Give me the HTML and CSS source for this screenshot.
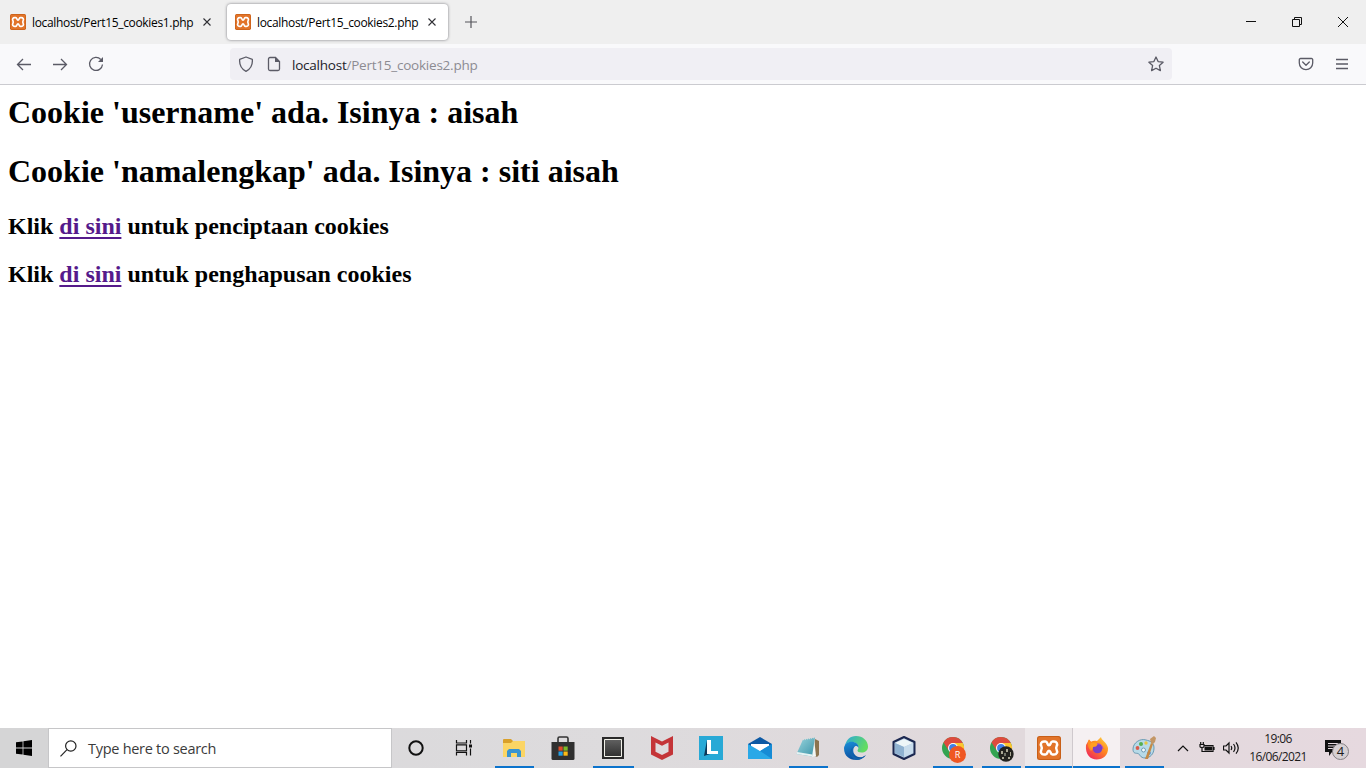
FILE: index.html
```html
<!DOCTYPE html>
<html lang="id">
<head>
<meta charset="utf-8">
<title>localhost/Pert15_cookies2.php</title>
<link rel="stylesheet" href="styles.css">
</head>
<body>
<svg class="defs" width="0" height="0">
  <defs>
    <linearGradient id="sky" x1="0" y1="0" x2="1" y2="1"><stop offset="0" stop-color="#9bd6de"/><stop offset="1" stop-color="#3b93a8"/></linearGradient>
    <linearGradient id="edgeBlue" x1="0" y1="0" x2="0.3" y2="1"><stop offset="0" stop-color="#1b8fd8"/><stop offset="1" stop-color="#0c4fa0"/></linearGradient>
    <linearGradient id="edgeGreen" x1="0" y1="0" x2="1" y2="0.4"><stop offset="0" stop-color="#2aa7dc"/><stop offset="1" stop-color="#62dc62"/></linearGradient>
    <linearGradient id="fox" x1="1" y1="0" x2="0.2" y2="1"><stop offset="0" stop-color="#ffe14a"/><stop offset=".45" stop-color="#ff8a1e"/><stop offset="1" stop-color="#f0245e"/></linearGradient>
    <linearGradient id="dark" x1="0" y1="0" x2="0" y2="1"><stop offset="0" stop-color="#616161"/><stop offset="1" stop-color="#303030"/></linearGradient>
    <symbol id="xampp" viewBox="0 0 24 24">
      <rect width="24" height="24" rx="2.500" fill="#c85f17"/><rect x="1" y="1" width="22" height="22" rx="2" fill="#e2742a"/>
      <path d="M8.500 5.500H7C4.200 5.500 3.200 8 4.300 10 5 11.300 5 12.700 4.300 14 3.200 16 4.200 18.500 7 18.500H8.500C10.800 18.500 10 14.700 12 14.700S13.200 18.500 15.500 18.500H17C19.800 18.500 20.800 16 19.700 14 19 12.700 19 11.300 19.700 10 20.800 8 19.800 5.500 17 5.500H15.500C13.200 5.500 14 9.300 12 9.300S10.800 5.500 8.500 5.500Z" fill="none" stroke="#fff" stroke-width="2.500" stroke-linejoin="round"/>
    </symbol>
    <symbol id="chrome" viewBox="0 0 24 24">
      <circle cx="12" cy="12" r="11" fill="#33a451"/><path d="M12 7h9.800A11 11 0 0 1 11 23l5.300-8.500Z" fill="#fbc52f"/><path d="M2.500 6.500 7.700 14.500 12 7h9.800A11 11 0 0 0 2.500 6.500Z" fill="#dd4b3e"/>
      <circle cx="12" cy="12" r="5" fill="#fff"/><circle cx="12" cy="12" r="3.900" fill="#3f7fe8"/>
    </symbol>
  </defs>
</svg>
<div class="screen">
  <header class="tabs">
    <div class="tab"><svg class="favicon"><use href="#xampp"/></svg><span class="label">localhost/Pert15_cookies1.php</span><svg class="close" viewBox="0 0 8 8"><path d="m.5.5 7 7m0-7-7 7"/></svg></div>
    <div class="tab active"><svg class="favicon"><use href="#xampp"/></svg><span class="label">localhost/Pert15_cookies2.php</span><svg class="close" viewBox="0 0 8 8"><path d="m.5.5 7 7m0-7-7 7"/></svg></div>
    <svg class="plus" viewBox="0 0 12 12"><path d="M6 0v12M0 6h12"/></svg>
    <div class="window-buttons">
      <svg viewBox="0 0 12 12"><path d="M1 5.500h10" /></svg>
      <svg viewBox="0 0 12 12"><path d="M1.500 3.500h7v7h-7zM3.500 3.500v-2h7v7h-2"/></svg>
      <svg viewBox="0 0 12 12"><path d="m1 1 10 10M11 1 1 11"/></svg>
    </div>
  </header>
  <nav class="toolbar">
    <div class="nav-buttons">
      <svg viewBox="0 0 16 16"><path d="M15 8.500H1.500M7 3 1.500 8.500 7 14"/></svg>
      <svg viewBox="0 0 16 16"><path d="M1 8.500h13.500M9 3l5.500 5.500L9 14"/></svg>
      <svg viewBox="0 0 16 16"><path d="M12.800 3.500A6.500 6.500 0 1 0 14.500 8.500"/><path d="M15 1v5h-5z" fill="#5b5b66" stroke="none"/></svg>
    </div>
    <div class="address">
      <svg viewBox="0 0 16 16"><path d="M8 1 14.300 3.300C14.800 8.500 12.500 13 8 15.300 3.500 13 1.200 8.500 1.700 3.300Z" stroke-linejoin="round"/></svg>
      <svg viewBox="0 0 16 16"><path d="M9.500 1.500H4A1.500 1.500 0 0 0 2.500 3v10A1.500 1.500 0 0 0 4 14.500h8a1.500 1.500 0 0 0 1.500-1.500V5.500z"/><path d="M9 1v5h5z" fill="#5b5b66" stroke="none"/></svg>
      <span class="url">localhost<span>/Pert15_cookies2.php</span></span>
      <svg class="star" viewBox="0 0 16 16"><path d="m8 1 2.100 4.600 5 .6-3.700 3.400 1 5L8 12.200l-4.400 2.400 1-5L.9 6.200l5-.6Z" stroke-linejoin="round"/></svg>
    </div>
    <div class="tools">
      <svg viewBox="0 0 16 16"><path d="M2.500 2.500h11a1.200 1.200 0 0 1 1.200 1.200V7a6.700 6.700 0 0 1-13.400 0V3.700a1.200 1.200 0 0 1 1.200-1.200ZM4.700 6 8 9.200 11.300 6" stroke-linecap="round" stroke-linejoin="round"/></svg>
      <svg viewBox="0 0 16 16"><path d="M2 3.500h12M2 8h12M2 12.500h12"/></svg>
    </div>
  </nav>
  <main class="page">
    <h1>Cookie 'username' ada. Isinya : aisah</h1>
    <h1>Cookie 'namalengkap' ada. Isinya : siti aisah</h1>
    <h2>Klik <a href="#">di sini</a> untuk penciptaan cookies</h2>
    <h2>Klik <a href="#">di sini</a> untuk penghapusan cookies</h2>
  </main>
  <footer class="taskbar">
    <div class="start"><svg viewBox="0 0 16 16"><path d="M0 2.300 6.600 1.400V7.600H0zM7.400 1.300 16 0v7.600H7.400zM0 8.400h6.600v6.200L0 13.700zM7.400 8.400H16V16l-8.600-1.300z"/></svg></div>
    <div class="search"><svg viewBox="0 0 17 17"><circle cx="10.800" cy="6" r="5.200"/><path d="m7 9.700-6.500 6.600"/></svg><span>Type here to search</span></div>
    <div class="apps">
      <div><svg viewBox="0 0 24 24"><circle cx="12" cy="12" r="6.700" fill="none" stroke="#111" stroke-width="2"/></svg></div>
      <div><svg class="views" viewBox="0 0 24 24" fill="none" stroke="#111" stroke-width="1.200"><path d="M3.500 4v3h10V4M3.500 19.500v-3h10v3M3.500 8.800h10v6h-10zM17.500 4v3.500M17.500 12.500v7"/><path d="M16 8.500h3v3h-3z" fill="#111" stroke="none"/></svg></div>
      <div class="running"><svg viewBox="0 0 24 24"><path d="M1 4q0-1 1-1h7l2 2h11v16H1z" fill="#d9a02a"/><path d="M1 7h8l2-2h12v16H1z" fill="#fbd565"/><path d="M5 21v-6l2-2h10l2 2v6h-4v-4H9v4z" fill="#3994d1"/></svg></div>
      <div><svg viewBox="0 0 24 24"><path d="M7 6V2.500Q7 1 8.500 1h7Q17 1 17 2.500V6" fill="none" stroke="#333" stroke-width="1.600"/><path d="M.5 6h23v16.500q0 1.500-1.500 1.500H2q-1.500 0-1.500-1.500z" fill="#303030"/><path d="M7.500 10.500h4.200v4.200H7.500z" fill="#e04d2b"/><path d="M12.500 10.500h4.200v4.200h-4.200z" fill="#7cb928"/><path d="M7.500 15.500h4.200v4.200H7.500z" fill="#25a0e5"/><path d="M12.500 15.500h4.200v4.200h-4.200z" fill="#fbbb16"/></svg></div>
      <div class="running"><svg viewBox="0 0 24 24"><path d="M1 1h22v22H1z" fill="#292929"/><path d="M3.500 3.500h17v17h-17z" fill="url(#dark)" stroke="#f1f1e9"/></svg></div>
      <div><svg viewBox="0 0 24 24"><path d="m1 0 11 5.500L23 0v18.500L12 24 1 18.500z" fill="#c43438"/><path d="m5.500 6.500 6.500 3.300 6.500-3.300v9.300L12 19l-6.500-3.200z" fill="#dfdadd"/></svg></div>
      <div><svg viewBox="0 0 24 24"><path d="M0 0h24v24H0z" fill="#28a9d6"/><path d="m8 4-3 16 6-2-2-2z" fill="#0b3759"/><path d="M8 4h4v11h7v3H8z" fill="#fff"/></svg></div>
      <div><svg viewBox="0 0 24 24"><path d="m12 1 12 7v4H0V8z" fill="#0c59a4"/><path d="M3 8h18v9H3z" fill="#fff"/><path d="m0 8 12 7 12-7v15H0z" fill="#29a8e7"/><path d="m12 15 12-7v15z" fill="#168bd5"/><path d="m3 8h18l-9 6.700z" fill="#fff"/></svg></div>
      <div class="running"><svg viewBox="0 0 24 24"><path d="M19 3 23 5v14l-2 2-4-2z" fill="#8c7450"/><path d="m18 2 2 18-5 1-1-3z" fill="#f2f6f4"/><path d="M7 3.500 19 1.500 16 20.500.5 18z" fill="url(#sky)"/><path d="m.5 18 15.500 2.500.3-2L1 16z" fill="#e6f2f2"/><path d="m7 3.500 12-2" stroke="#ddd" stroke-width="1.300" stroke-dasharray="1 1"/></svg></div>
      <div><svg viewBox="0 0 24 24"><path d="M1 10C2 4 6 0 12 0c7 0 12 5 12 10.500 0 4-3 6-6.500 6-3 0-4-1-4-2 0-.8 1-1.300 1-3C14.500 8 11 5.500 7 6c-3 .3-5 2-6 4z" fill="url(#edgeGreen)"/><path d="M0 12C.5 8 3.500 5.700 7.500 5.700c4.500 0 7.500 2.800 7 6.300-.6-1.500-1.500-2-3-2-3 1.500-3.500 8 1.500 10.500 3 1.500 6 .7 9-1.300C17 26 0 26.500 0 12z" fill="url(#edgeBlue)"/><path d="M10.500 10.500C6.500 13 7 20 12.500 21.500c3.500 1 7-.2 9.500-2.800-3 4.200-6.500 5.500-10 5.300C4.500 21 4.500 12.500 10.500 10.500z" fill="#1363ab"/></svg></div>
      <div><svg viewBox="0 0 24 24"><path d="m12 1 10.500 5v12L12 23 1.500 18V6z" fill="#b5cbe1" stroke="#1b2850" stroke-width="2" stroke-linejoin="round"/><path d="M3 7 12 3l9 4-9 4z" fill="#edf6f8"/><path d="m3 7 9 4v10l-9-4z" fill="#8fb2d1"/><path d="m12 11 9-4v10l-9 4z" fill="#c7dcec"/></svg></div>
      <div class="running"><svg viewBox="0 0 24 24"><use href="#chrome"/></svg><span class="profile">R</span></div>
      <div class="running"><svg viewBox="0 0 24 24"><use href="#chrome"/></svg><svg class="avatar" viewBox="0 0 16 16"><circle cx="8" cy="8" r="7.700" fill="#23231f"/><path d="M3 5h2v3H3zM8 3h2v3H8zM12 6h1v4h-1zM4 11h2v2H4zM10 11h2v2h-2z" fill="#aaa895"/><path d="M6 7h2v3H6z" fill="#73766a"/></svg></div>
      <div class="running wide"><svg viewBox="0 0 24 24"><use href="#xampp"/></svg></div>
      <div class="running wide fx"><svg viewBox="0 0 24 24"><path d="M1 9 4 3.500l2 2.300C8 4.500 10 4.500 12 5L16 1c0 3 6 5 7 11 .5 7-5 11.500-11.300 11.500S0 18.500 1 9z" fill="url(#fox)"/><path d="m4 3.500 2 3 6 .5-2 4-4 4C3 12 2 7 4 3.500z" fill="#ff8e20"/><circle cx="12.500" cy="12.500" r="4.800" fill="#793fc9"/><path d="M6 7q4-2 7 1l-2 2.500-3 .5-1 3Q4 11 6 7z" fill="#ff9f22"/><path d="M12 8q5-1 6 5" fill="none" stroke="#b449c0"/></svg></div>
      <div class="running"><svg viewBox="0 0 24 24"><path d="M14 4C8 2 1 7 1 13c0 5 3 4 5 4.500S8 22 13 22s9-4 9-10-4-7-8-8z" fill="#b7dae8" stroke="#6899b2"/><circle cx="5.500" cy="12" r="1.900" fill="#d85b4c"/><circle cx="9" cy="8" r="2" fill="#55ae50"/><circle cx="14" cy="7" r="1.700" fill="#e7c643"/><circle cx="11.500" cy="14" r="2" fill="#f5fafb" stroke="#719cb2"/><circle cx="17" cy="17" r="1.800" fill="#4c82ce"/><path d="m13 23 6-16 2 1-5 15z" fill="#c58a46"/><path d="m19 7-1-4 4-3 2 2-1 4-2 2z" fill="#c39665"/></svg></div>
    </div>
    <div class="tray">
      <svg class="chevron" viewBox="0 0 12 8"><path d="m1 7 5-5 5 5"/></svg>
      <svg class="battery" viewBox="0 0 16 12"><path d="M5 3.500h9v6H4.500M15 5v3M1 2.500h4v2q0 1-2 1t-2-1zM1.700 0v2M4.300 0v2M3 5v4.500h2"/><path d="M5.500 4.500h7.500v4H5.500z" fill="#111" stroke="none"/></svg>
      <svg class="volume" viewBox="0 0 17 14"><path d="M.5 5H3l3-3v10L3 9H.5zM8 5q1.500 2 0 4M10.500 3q3 4 0 8M13 1.300q4.500 5.700 0 11.400"/></svg>
      <div class="clock"><span>19:06</span><span class="date">16/06/2021</span></div>
      <div class="notice"><svg viewBox="0 0 16 16"><path d="M0 0h16v12H7l-3 4v-4H0z" fill="#111"/><path d="M3 3.500h10M3 6h10M3 8.500h7" stroke="#e5d9de"/></svg><span>4</span></div>
    </div>
  </footer>
</div>
</body>
</html>
```
FILE: styles.css
```css
* { box-sizing: border-box; }
body { margin: 0; background: #fff; }
svg { display: block; flex: none; }
.defs { position: absolute; }
.screen { width: 1366px; height: 768px; display: flex; flex-direction: column; overflow: hidden; }
.tabs { height: 44px; flex: none; display: flex; align-items: center; background: #efefef; font: 12px "Open Sans", sans-serif; color: #000; }
.tab { width: 222px; height: 36px; margin-left: 2px; padding: 0 12px 0 8px; display: flex; align-items: center; border-radius: 4px; }
.tab.active { width: 221px; margin-left: 3px; background: #fff; box-shadow: 0 0 3px #77777c; }
.favicon { width: 16px; height: 16px; }
.label { width: 161px; margin-left: 6px; white-space: nowrap; font-size: 12px; letter-spacing: -.33px; }
.close { width: 8px; height: 8px; margin-left: 10px; stroke: #303035; stroke-width: 1.1; }
.plus { width: 12px; height: 12px; margin-left: 17px; stroke: #55555b; stroke-width: 1.2; }
.window-buttons { margin-left: auto; padding-right: 17px; display: flex; gap: 34px; }
.window-buttons svg { width: 12px; height: 12px; fill: none; stroke: #111; stroke-width: 1; }
.toolbar { height: 41px; flex: none; display: flex; align-items: center; background: #f9f9fb; border-bottom: 1px solid #cbcbd0; }
.toolbar svg { width: 16px; height: 16px; fill: none; stroke: #5b5b66; stroke-width: 1.3; }
.nav-buttons { width: 230px; padding-left: 16px; display: flex; gap: 20px; }
.address { width: 942px; height: 32px; padding: 0 8px; display: flex; align-items: center; gap: 12px; border-radius: 4px; background: #f0eff4; }
.url { color: #222128; font: 13.5px "Open Sans", sans-serif; letter-spacing: -.23px; margin-left: -2px; padding-top: 1px; }
.url span { color: #8c8b92; }
.star { margin-left: auto; }
.tools { display: flex; gap: 20px; margin-left: 126px; }
.page { flex: 1; padding: 8px; color: #000; font-family: "Liberation Serif", serif; }
.page h1 { margin: 0 0 21px; font-size: 32px; line-height: 38px; height: 38px; }
.page h1 + h2 { margin-top: 22px; }
.page h2 { margin: 0 0 20px; font-size: 24px; line-height: 28px; height: 28px; }
.page a { color: #551a8b; text-decoration-thickness: 2px; text-underline-offset: 3px; }
.taskbar { height: 40px; flex: none; display: flex; font-family: "Open Sans", sans-serif; background: linear-gradient(90deg, #d8d8da, #dddbdd 45%, #e1d9dc 75%, #e6d9df); }
.start { width: 48px; display: grid; place-items: center; background: #d5d5d6; }
.start svg { width: 16px; height: 16px; }
.search { width: 344px; display: flex; align-items: center; padding-left: 11px; background: #fff; border: 1px solid #c6c6c8; color: #3b3b3b; font-size: 14.5px; letter-spacing: -.28px; }
.search svg { width: 17px; height: 17px; fill: none; stroke: #222; stroke-width: 1.2; }
.search span { margin-left: 11px; }
.apps { display: grid; grid-template-columns: 48px 50px 48px 50px 50px 48px 50px 48px 48px 48px 48px 49px 48px 47px 48px 48px; width: 776px; }
.apps > div { position: relative; display: grid; place-items: center; }
.apps svg { width: 24px; height: 24px; }
.apps .views { margin-left: -1px; }
.apps .running::after { content: ""; position: absolute; left: 5px; right: 4px; bottom: 0; height: 2px; background: #0b73cc; }
.apps .running.wide { background: #ece7e9; }
.apps .running.wide::after { left: 0; right: 0; }
.apps .running.fx { background: #f5f0f2; border-left: 1px solid #cfc9cd; }
.profile { position: absolute; left: 21px; top: 18px; width: 17px; height: 17px; border-radius: 50%; background: #ef5723; color: #fff; font-size: 9px; line-height: 17px; text-align: center; }
.apps .avatar { position: absolute; left: 21px; top: 18px; width: 16px; height: 16px; }
.tray { flex: 1; display: flex; align-items: center; padding-left: 9px; color: #1c1a1b; }
.tray svg { fill: none; stroke: #111; stroke-width: 1.2; }
.chevron { width: 12px; height: 8px; }
.battery { width: 16px; height: 12px; margin-left: 10px; }
.volume { width: 17px; height: 14px; margin-left: 8px; }
.clock { width: 60px; margin-left: 8px; display: flex; flex-direction: column; align-items: center; font-size: 12px; line-height: 18px; letter-spacing: -.6px; white-space: nowrap; }
.notice { position: relative; width: 24px; height: 24px; margin-left: 17px; padding-top: 4px; }
.notice svg { width: 16px; height: 16px; stroke: none; }
.notice span { position: absolute; left: 7px; top: 7px; width: 17px; height: 17px; border: 1px solid #858085; border-radius: 50%; background: #d6d0d3; font-size: 13px; line-height: 15px; text-align: center; }
```
